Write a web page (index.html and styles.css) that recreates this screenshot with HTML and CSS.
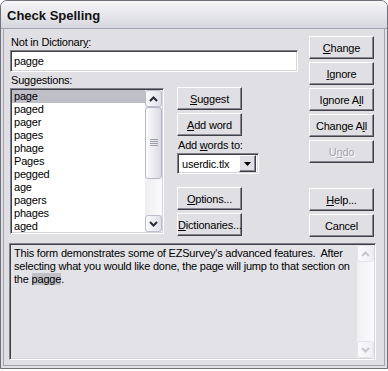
FILE: index.html
```html
<!DOCTYPE html>
<html lang="en">
<head>
    <meta charset="UTF-8">
    <title>Check Spelling</title>
    <link rel="stylesheet" href="styles.css">
</head>
<body>
    <div class="window">
        <div class="titlebar">Check Spelling</div>
        <div class="dialog">
            <div class="top">
                <div class="left">
                    <div class="label">Not in Dictionar<u>y</u>:</div>
                    <div class="textbox">pagge</div>
                    <div class="label suggest-label">Su<u>g</u>gestions:</div>
                    <div class="middle">
                        <!-- suggestion list -->
                        <div class="listbox">
                            <ul class="items">
                                <li class="selected">page</li>
                                <li>paged</li>
                                <li>pager</li>
                                <li>pages</li>
                                <li>phage</li>
                                <li>Pages</li>
                                <li>pegged</li>
                                <li>age</li>
                                <li>pagers</li>
                                <li>phages</li>
                                <li>aged</li>
                            </ul>
                            <div class="scrollbar">
                                <div class="sb-btn">
                                    <svg width="9" height="6" viewBox="0 0 9 6"><path d="M1 5 L4.5 1.5 L8 5" fill="none" stroke="#2b2b35" stroke-width="2"/></svg>
                                </div>
                                <div class="sb-track">
                                    <div class="sb-thumb">
                                        <svg width="8" height="8" viewBox="0 0 8 8"><path d="M0 0.5h8M0 2.5h8M0 4.5h8M0 6.5h8" stroke="#9c9cac" stroke-width="1"/></svg>
                                    </div>
                                </div>
                                <div class="sb-btn">
                                    <svg width="9" height="6" viewBox="0 0 9 6"><path d="M1 1 L4.5 4.5 L8 1" fill="none" stroke="#2b2b35" stroke-width="2"/></svg>
                                </div>
                            </div>
                        </div>

                        <div class="midcol">
                            <button class="btn"><u>S</u>uggest</button>
                            <button class="btn"><u>A</u>dd word</button>
                            <div class="label words-label">Add <u>w</u>ords to:</div>
                            <div class="combo">
                                <span class="combo-text">userdic.tlx</span>
                                <span class="combo-drop">
                                    <svg width="7" height="4" viewBox="0 0 7 4"><path d="M0 0h7L3.5 4z" fill="#000"/></svg>
                                </span>
                            </div>
                            <button class="btn group-gap"><u>O</u>ptions...</button>
                            <button class="btn"><u>D</u>ictionaries...</button>
                        </div>
                    </div>
                </div>

                <div class="rightcol">
                    <button class="btn"><u>C</u>hange</button>
                    <button class="btn"><u>I</u>gnore</button>
                    <button class="btn">Ignore A<u>l</u>l</button>
                    <button class="btn">Change A<u>l</u>l</button>
                    <button class="btn" disabled>U<u>n</u>do</button>
                    <button class="btn help"><u>H</u>elp...</button>
                    <button class="btn">Cancel</button>
                </div>
            </div>

            <!-- description pane -->
            <div class="notes">
                <p class="notes-text">This form demonstrates some of EZSurvey's advanced features.&nbsp; After<br>selecting what you would like done, the page will jump to that section on<br>the <span class="mark">pagge</span>.</p>
                <div class="scrollbar off">
                    <div class="sb-btn">
                        <svg width="9" height="6" viewBox="0 0 9 6"><path d="M1 5 L4.5 1.5 L8 5" fill="none" stroke="#c6c6d0" stroke-width="2"/></svg>
                    </div>
                    <div class="sb-track"></div>
                    <div class="sb-btn">
                        <svg width="9" height="6" viewBox="0 0 9 6"><path d="M1 1 L4.5 4.5 L8 1" fill="none" stroke="#c6c6d0" stroke-width="2"/></svg>
                    </div>
                </div>
            </div>
        </div>
    </div>
</body>
</html>
```

FILE: styles.css
```css
* {
    margin: 0;
    padding: 0;
    box-sizing: border-box;
}

body {
    background: #fff;
    font-family: "Liberation Sans", Arial, sans-serif;
    font-size: 11px;
    letter-spacing: -0.2px;
    color: #000;
}

.window {
    width: 388px;
    height: 369px;
    background: #e0dfe3;
    border: 1px solid #70707c;
    border-radius: 7px 7px 0 0;
    padding: 0 2px 2px;
    display: flex;
    flex-direction: column;
}

.titlebar {
    height: 28px;
    margin: 0 -2px;
    padding: 7px 0 0 6px;
    border-radius: 6px 6px 0 0;
    border-bottom: 1px solid #a2a2ac;
    background: linear-gradient(#f6f6f9, #e3e3e9 60%, #d6d6de);
    font-size: 13px;
    font-weight: bold;
    letter-spacing: 0;
    color: #111;
}

.dialog {
    flex: 1;
    border: 1px solid #a4a4ae;
    border-top: none;
    padding: 7px 10px 4px 6px;
}

.top {
    display: flex;
    gap: 11px;
}

.left {
    width: 288px;
}

.label {
    height: 13px;
    line-height: 13px;
    padding-left: 1px;
    white-space: nowrap;
}

.textbox {
    height: 22px;
    margin-top: 1px;
    background: #fff;
    border: 1px solid;
    border-color: #7f7f87 #fff #fff #7f7f87;
    box-shadow: inset 1px 1px #404048, inset -1px -1px #d4d4da;
    padding: 3px 3px;
    line-height: 14px;
}

.suggest-label {
    margin-top: 2px;
}

.middle {
    display: flex;
    gap: 13px;
}

.listbox {
    width: 154px;
    height: 146px;
    margin-top: 1px;
    display: flex;
    background: #fff;
    border: 1px solid;
    border-color: #7f7f87 #fff #fff #7f7f87;
    box-shadow: inset 1px 1px #404048, inset -1px -1px #d4d4da;
    padding: 1px;
    overflow: hidden;
}

.items {
    list-style: none;
    flex: 1;
    overflow: hidden;
}

.items li {
    height: 13px;
    line-height: 13px;
    padding-left: 2px;
}

.items li.selected {
    background: #bfbfc8;
}

.scrollbar {
    width: 17px;
    display: flex;
    flex-direction: column;
    background: #f3f3f5;
}

.sb-btn {
    height: 17px;
    flex-shrink: 0;
    display: flex;
    align-items: center;
    justify-content: center;
    border: 1px solid #bcbcca;
    border-radius: 3px;
    background: linear-gradient(90deg, #fbfbfd, #dedee8);
}

.sb-track {
    flex: 1;
    padding: 0 0 36px;
    background: linear-gradient(90deg, #eeeef2, #fafafc);
}

.sb-thumb {
    height: 72px;
    border: 1px solid #b6b6c6;
    border-radius: 3px;
    background: linear-gradient(90deg, #fdfdfe, #d9d9e3);
    display: flex;
    align-items: center;
    justify-content: center;
}

.midcol {
    width: 82px;
    display: flex;
    flex-direction: column;
    gap: 3px;
}

.btn {
    width: 65px;
    height: 23px;
    flex-shrink: 0;
    background: #e0dfe3;
    border: 1px solid;
    border-color: #fff #404048 #404048 #fff;
    box-shadow: inset -1px -1px #85858f;
    font-family: "Liberation Sans", Arial, sans-serif;
    font-size: 11px;
    letter-spacing: -0.2px;
    color: #000;
    white-space: nowrap;
    padding: 0;
}

.btn:disabled {
    color: #a4a4ac;
    text-shadow: 1px 1px #fff;
}

.combo {
    width: 82px;
    height: 21px;
    margin-top: -2px;
    display: flex;
    align-items: center;
    background: #fff;
    border: 1px solid;
    border-color: #7f7f87 #fff #fff #7f7f87;
    box-shadow: inset 1px 1px #404048, inset -1px -1px #d4d4da;
    padding: 2px;
}

.combo-text {
    flex: 1;
    padding-left: 2px;
}

.combo-drop {
    width: 17px;
    height: 17px;
    display: flex;
    align-items: center;
    justify-content: center;
    background: #e0dfe3;
    border: 1px solid;
    border-color: #fff #404048 #404048 #fff;
    box-shadow: inset -1px -1px #85858f;
}

.group-gap {
    margin-top: 10px;
}

.rightcol {
    width: 65px;
    display: flex;
    flex-direction: column;
    gap: 3px;
}

.rightcol .help {
    margin-top: 22px;
}

.notes {
    height: 117px;
    margin: 6px -2px 0 -1px;
    display: flex;
    background: #e3e3e7;
    border: 1px solid;
    border-color: #7f7f87 #fff #fff #7f7f87;
    box-shadow: inset 1px 1px #404048, inset -1px -1px #d4d4da;
    padding: 1px 1px 1px 2px;
}

.notes-text {
    flex: 1;
    padding: 2px 0 0 2px;
    line-height: 13px;
    white-space: nowrap;
}

.mark {
    background: #bfbfc8;
}

.scrollbar.off {
    background: linear-gradient(90deg, #f0f0f3, #fbfbfd);
}

.scrollbar.off .sb-btn {
    border-color: #e4e4ea;
    background: linear-gradient(90deg, #fbfbfd, #eeeef3);
}

.scrollbar.off .sb-track {
    background: none;
    padding: 0;
}
```
